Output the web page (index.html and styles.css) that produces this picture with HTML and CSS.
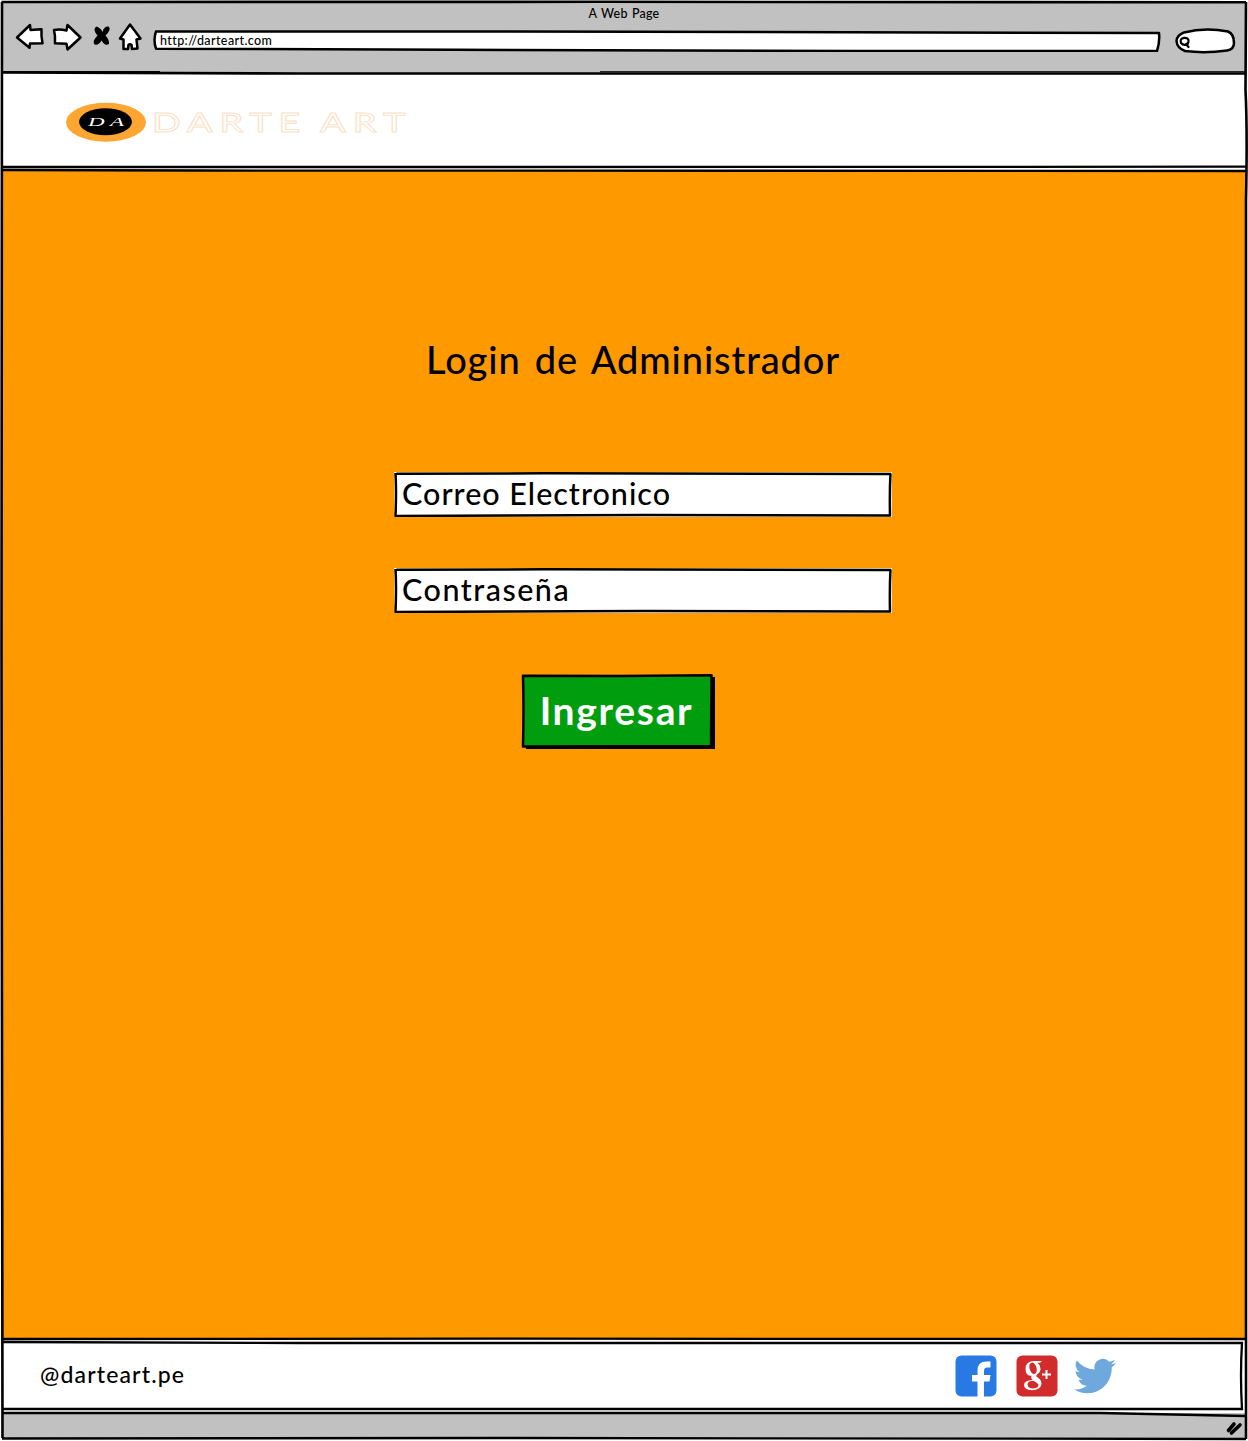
FILE: index.html
```html
<!DOCTYPE html>
<html lang="es">
<head>
<meta charset="utf-8">
<title>A Web Page</title>
<link rel="stylesheet" href="styles.css">
</head>
<body>
<div class="window">
  <header class="chrome">
    <div class="window-title"><span>A Web Page</span></div>
    <div class="toolbar">
      <svg class="nav-icons" width="132" height="34" viewBox="14 20 132 34">
        <g class="outline-icon">
          <path d="M17 37.500L30 25L30.500 30L41.500 29.200Q41 36 42.500 43.200L30 43.600L29.500 47.800Z"/>
          <path d="M67.500 25L80.500 37.500L67.500 49.500L66.500 43.700L55 43.300Q55.500 36 54 30Q60 29 66.500 30.500Z"/>
          <path d="M130 24.500L140.500 38.500L136.500 39.500L137.500 48.500L132 49L131.500 45Q130 43.500 128.500 45L128 49L123.500 49L123.500 39.500L120 38.500Z"/>
        </g>
        <path class="close-icon" d="M96.500 26.500Q101 28 102.500 32Q104 26 108.500 26.500Q112 29 105.500 35.500Q109.500 40 109 44Q105 46.500 101.500 40.500Q99 45.500 94.500 44.500Q92 41 97.500 35.500Q92 29 96.500 26.500Z"/>
      </svg>
      <div class="address">
        <svg class="sketch" viewBox="0 0 1008 22"><path class="fill-white" d="M3 1.500L350 1.500Q700 2.500 1006 3Q1007 12 1004 21L700 21L300 19.700L3 18.700Q0 10 3 1.500Z"/></svg>
        <span class="url">http://darteart.com</span>
      </div>
      <svg class="search" width="62" height="26" viewBox="1174 28 62 26">
        <path class="fill-white" d="M1184 32.500Q1205 27 1228 31.500Q1234 34 1234 43Q1234 49.500 1227 50.500Q1205 53.500 1185 51Q1177 48 1176.500 41Q1177 35 1184 32.500Z"/>
        <path class="lens" d="M1187.800 44Q1183.500 46 1181 43Q1179.500 38.500 1184 37.800Q1189 37.500 1188.500 41.500Q1188 44.500 1185.500 43.500L1188.500 47"/>
      </svg>
    </div>
  </header>
  <section class="brand-bar">
    <svg class="logo" width="350" height="46" viewBox="62 100 350 46">
      <ellipse cx="106" cy="122.300" rx="40" ry="19.500" fill="#ffa531"/>
      <ellipse cx="105.500" cy="121.800" rx="26.500" ry="13.500" fill="#000"/>
      <text class="monogram" x="88" y="126" textLength="36" lengthAdjust="spacingAndGlyphs">D A</text>
      <text class="wordmark" transform="translate(152 131.500) scale(1.400 1)" textLength="106">DARTE</text>
      <text class="wordmark" transform="translate(320 131.500) scale(1.400 1)" textLength="61">ART</text>
    </svg>
  </section>
  <main class="content">
    <h1 class="heading">Login de Administrador</h1>
    <form class="login">
      <label class="field">
        <svg class="sketch" viewBox="0 0 498 46"><rect y="1" width="498" height="45" fill="#fff"/><path d="M2.500 2.700L150 2.300L497 3M1.500 2Q2.500 20 1.500 45L250 44L496 44.500Q495.500 20 496.500 2.500"/></svg>
        <span>Correo Electronico</span>
      </label>
      <label class="field field-password">
        <svg class="sketch" viewBox="0 0 498 46"><rect y="1" width="498" height="45" fill="#fff"/><path d="M2.500 2.700L150 2.300L497 3M1.500 2Q2.500 20 1.500 45L250 44L496 44.500Q495.500 20 496.500 2.500"/></svg>
        <span>Contraseña</span>
      </label>
      <button class="submit" type="button">
        <svg class="sketch" viewBox="0 0 194 76"><path class="shadow" d="M190 4H194V76H5V72H190Z"/><path class="fill-green" d="M2 2.700L100 3L190.500 2.300L190 73L2 73.500Q3 35 2 2.700Z"/></svg>
        <span>Ingresar</span>
      </button>
    </form>
  </main>
  <footer class="footer">
    <span class="handle">@darteart.pe</span>
    <div class="social">
      <svg width="42" height="42" viewBox="0 0 42 42"><rect x=".5" y=".5" width="41" height="41" rx="6" fill="#2879e4"/><path fill="#fff" d="M22.500 42V26.500H17V20H22.500V15.500Q22.500 6.500 31.500 6.500H35.500V12.500H32Q29 12.500 29 16V20H35.500L34.500 26.500H29V42Z"/></svg>
      <svg width="42" height="42" viewBox="0 0 42 42"><rect x=".5" y=".5" width="41" height="41" rx="6" fill="#d12b2b"/><path fill="#fff" fill-rule="evenodd" d="M16.500 6H26L24 7.800H21.500Q24.500 10 24.500 13.500Q24.500 17 21.500 19Q19.500 20.500 20.500 21.500L23.500 24Q26 26 25.500 29Q24.500 35 16 35.300Q8 35 8 30Q8 25.500 16.500 24.700Q14.500 23 15.500 20.800Q9.500 21 9.500 14Q9.500 7 16.500 6ZM16 7.500Q12.500 8.500 13.500 13.500Q15 19 18.500 19Q21.500 18 20.500 13Q19 7.500 16 7.500ZM17.500 25.700Q11.500 26 11.500 29.500Q12 33.500 17 33.500Q22.500 33 22.500 30Q22 28 17.500 25.700Z"/><path fill="none" stroke="#fff" stroke-width="2" d="M26 19.500H35M30.500 15V24"/></svg>
      <svg class="bird" width="42" height="36" viewBox="0 0 24 20"><path fill="#6fa8dc" d="M23.950 2.600a10 10 0 0 1-2.820.770 4.960 4.960 0 0 0 2.160-2.720 9.900 9.900 0 0 1-3.120 1.190A4.920 4.920 0 0 0 11.780 6.330 13.970 13.970 0 0 1 1.640 1.190a4.920 4.920 0 0 0 1.520 6.570A4.900 4.900 0 0 1 .930 7.150v.060a4.920 4.920 0 0 0 3.950 4.820 5 5 0 0 1-2.210.090 4.940 4.940 0 0 0 4.600 3.420A9.870 9.870 0 0 1 0 17.580a13.940 13.940 0 0 0 7.550 2.210c9.050 0 14-7.500 14-13.980 0-.210 0-.420-.020-.630a9.940 9.940 0 0 0 2.420-2.580z"/></svg>
    </div>
  </footer>
  <div class="status"></div>
  <svg class="frame" viewBox="0 0 1248 1441">
    <path d="M1.500 2L600 1.800L1246 2.300M2 2Q1.500 300 1.500 650T2.500 1438M1246 2L1245.500 90Q1247.500 130 1246 200L1246 640Q1247 900 1246 1200V1439"/>
    <path d="M2 72.500L300 73.500L1246 73.500"/>
    <path class="thin" d="M2 71.500H160M600 71.700H1246"/>
    <path class="rule" d="M2 167L500 167L1246 166.700M2 170L200 170.500L1246 171"/>
    <path class="rule" d="M2 1339L500 1338.700L1246 1339M2 1342L300 1343L1242 1343Q1240 1375 1242 1409L700 1409L2 1409"/>
    <path class="rule" d="M2 1413L1100 1413L1246 1416M2 1438.500L500 1438L1246 1439"/>
    <path class="grip" d="M1228.500 1430.500L1234 1424M1231.500 1433L1240 1425"/>
  </svg>
</div>
</body>
</html>
```
FILE: styles.css
```css
* { box-sizing: border-box; }
body { margin: 0; background: #fff; color: #000; font-family: Lato, "Open Sans", sans-serif; font-weight: 500; }
.window { position: relative; width: 1248px; height: 1441px; padding: 2px; display: flex; flex-direction: column; overflow: hidden; }
.frame { position: absolute; inset: 0; width: 1248px; height: 1441px; pointer-events: none; fill: none; stroke: #000; stroke-width: 2.6; }
.frame .rule { stroke-width: 2.3; }
.frame .thin { stroke-width: 1; }
.frame .grip { stroke-width: 3.6; stroke-linecap: round; }
.sketch { position: absolute; inset: 0; width: 100%; height: 100%; fill: none; stroke: #000; stroke-width: 2.5; stroke-linejoin: round; }
.sketch rect, .sketch .shadow { stroke: none; }
.sketch .shadow { fill: #000; }
.sketch .fill-white, .fill-white { fill: #fff; }
.sketch .fill-green { fill: #009e0f; }
.chrome { flex: 0 0 71px; background: #c1c1c1; }
.window-title { height: 18px; padding-top: 4px; text-align: center; font-size: 12.5px; line-height: 16px; letter-spacing: .2px; word-spacing: 1px; }
.toolbar { display: flex; padding-left: 12px; }
.nav-icons { flex: none; }
.outline-icon { fill: #fff; stroke: #000; stroke-width: 2.5; stroke-linejoin: round; }
.close-icon { fill: #000; }
.address { position: relative; width: 1008px; height: 22px; margin: 10px 0 0 7px; }
.url { position: relative; display: block; padding-left: 7px; font-size: 12.5px; line-height: 21px; letter-spacing: .4px; }
.search { margin: 8px 0 0 13px; fill: none; stroke: #000; stroke-width: 2.5; }
.search .lens { stroke-width: 2.2; stroke-linecap: round; }
.brand-bar { flex: 0 0 97px; padding: 27px 0 0 60px; background: #fff; }
.logo { display: block; }
.monogram { font: italic 13px "Liberation Serif", serif; fill: #fff; }
.wordmark { font: 500 27px Lato, sans-serif; fill: #fffdf9; stroke: #f9dfc4; stroke-width: .8; }
.content { flex: 0 0 1169px; padding-top: 165px; background: #ff9900; }
.heading { margin: 0; padding-left: 424px; font-size: 38px; font-weight: 500; line-height: 49px; letter-spacing: .9px; word-spacing: 3.5px; white-space: nowrap; }
.login { display: flex; flex-direction: column; margin: 87px 0 0 392px; }
.field { position: relative; width: 498px; height: 46px; padding-left: 8px; font-size: 30.5px; line-height: 44px; letter-spacing: 1px; }
.field span, .submit span { position: relative; }
.field-password { margin-top: 50px; letter-spacing: 1.5px; }
.submit { position: relative; width: 194px; height: 76px; margin: 60px 0 0 127px; padding: 0 3px 2px 0; border: 0; background: none; color: #fff; font: 700 39px/71px Lato, sans-serif; letter-spacing: 1.7px; }
.footer { flex: 0 0 74px; display: flex; padding: 16px 0 0 38px; background: #fff; }
.handle { width: 915px; font-size: 23px; line-height: 38px; letter-spacing: 1.15px; }
.social { display: flex; gap: 19px; }
.bird { margin: 3px 0 0 -3px; }
.status { flex: 1; background: #c1c1c1; }
```
